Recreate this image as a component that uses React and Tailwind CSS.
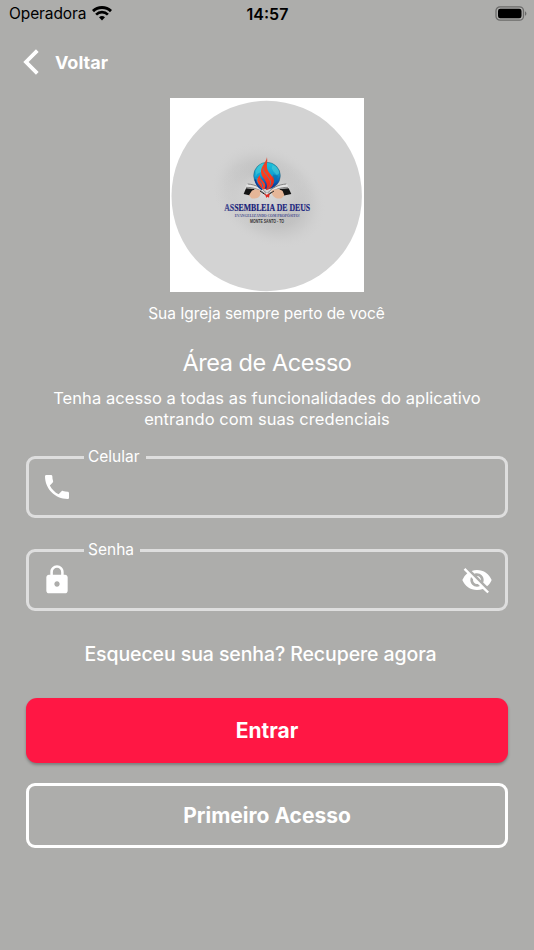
import React from 'react'
import { MdLock, MdPhone, MdVisibilityOff } from 'react-icons/md'

function StatusBar() {
  return (
    <div className="grid h-7 grid-cols-3 items-center pl-[9px] pr-[7px] text-black">
      <div className="flex items-center gap-[6px]">
        <span className="text-[15.5px] leading-7 tracking-[-0.1px]">Operadora</span>
        <svg viewBox="0 0 20 15" className="-mt-[2px] h-[15px] w-5" fill="none" stroke="currentColor">
          <path d="M1 5.1a13 13 0 0 1 18 0" strokeWidth="2.9" />
          <path d="M4.1 8.6a8.5 8.5 0 0 1 11.8 0" strokeWidth="2.7" />
          <path d="M10 14.4l-3-3.1a4.4 4.4 0 0 1 6 0z" fill="currentColor" stroke="none" />
        </svg>
      </div>
      <span className="pr-px text-center text-[16px] font-semibold leading-7">14:57</span>
      <svg viewBox="0 0 32 15" className="-mt-[2px] h-[15px] w-8 justify-self-end" fill="none">
        <rect x="1" y="0.8" width="27.5" height="13.4" rx="4" stroke="#6b6b6a" strokeWidth="1.3" />
        <rect x="3" y="2.8" width="23.5" height="9.4" rx="2.2" fill="#000" />
        <path d="M30 5.2c1.9.8 1.9 3.8 0 4.6z" fill="#6b6b6a" />
      </svg>
    </div>
  )
}

function Logo() {
  return (
    <svg viewBox="0 0 194 194" className="h-[194px] w-[194px] bg-white">
      <defs>
        <radialGradient id="shade">
          <stop offset="0" stopColor="#b0b0b0" />
          <stop offset="0.45" stopColor="#b4b4b4" stopOpacity="0.85" />
          <stop offset="0.75" stopColor="#c4c4c4" stopOpacity="0.45" />
          <stop offset="1" stopColor="#d3d3d3" stopOpacity="0" />
        </radialGradient>
        <radialGradient id="light">
          <stop offset="0" stopColor="#dadada" />
          <stop offset="0.5" stopColor="#d2d2d2" stopOpacity="0.8" />
          <stop offset="1" stopColor="#d0d0d0" stopOpacity="0" />
        </radialGradient>
        <linearGradient id="globe" x1="0.3" y1="0" x2="0.4" y2="1">
          <stop offset="0" stopColor="#1cc6dc" />
          <stop offset="0.5" stopColor="#0f9fd2" />
          <stop offset="0.8" stopColor="#0b55b4" />
          <stop offset="1" stopColor="#0a2f8c" />
        </linearGradient>
        <linearGradient id="fire" x1="0" y1="0" x2="0" y2="1">
          <stop offset="0" stopColor="#d8442e" />
          <stop offset="0.5" stopColor="#ff3f1c" />
          <stop offset="1" stopColor="#e8251c" />
        </linearGradient>
        <linearGradient id="title">
          <stop offset="0" stopColor="#5a609c" />
          <stop offset="0.15" stopColor="#141a72" />
          <stop offset="1" stopColor="#1f2680" />
        </linearGradient>
      </defs>
      <circle cx="96.7" cy="98" r="95.2" fill="#d3d3d3" />
      <ellipse cx="99" cy="98" rx="62" ry="48" transform="rotate(35 99 98)" fill="url(#shade)" />
      <ellipse cx="94" cy="97" rx="50" ry="34" fill="url(#light)" />

      <g transform="translate(40 47) scale(0.3333)">
        {/* open book */}
        <path d="M171 147c-14-18-34-29-60-30l-8 17c24-2 46 3 68 21 20-18 44-23 68-21l-8-17c-26 1-46 12-60 30z" fill="#e4e4e4" />
        <path d="M169 144c-14-16-32-25-56-27M168 148c-16-13-36-21-60-21M173 144c14-16 32-25 56-27M174 148c16-13 36-21 60-21" fill="none" stroke="#555" strokeWidth="2" />

        {/* globe */}
        <circle cx="171" cy="92" r="40" fill="url(#globe)" stroke="#2a5a70" strokeWidth="1.5" />
        <path d="M137 78c4-12 12-20 22-23l6 6-9 9-3 11-12 6-4 9zM188 60c11 4 18 13 20 24l-7 6-10-10-6-10zM140 98l11 5 3 13-5 4c-6-5-10-12-9-22z" fill="#5fd4d8" opacity="0.45" />
        <path d="M190 88l14 4-7 20-12 8z" fill="#0a6fb0" opacity="0.7" />

        {/* flame */}
        <path d="M171 36c-2 16-18 28-18 44 0 18 18 24 18 42 0 6-2 10-4 14 14-4 26-16 24-30-2-16-18-22-20-38-1-10 2-20 0-32z" fill="url(#fire)" />
        <path d="M160 70c-2 16 22 26 22 44 0 8-4 14-10 18" fill="none" stroke="#14a0cf" strokeWidth="2" />
        <path d="M188 92c6 12 4 24-4 34l-12 10c10-14 16-26 16-44z" fill="#e4301f" />
        <path d="M150 90c-2 14 16 18 16 32 0 5-2 9-4 12-8-6-18-16-20-26-1-7 3-12 8-18z" fill="#ff3a1c" />
        <path d="M149 106c4 6 10 10 9 20" fill="none" stroke="#1687c4" strokeWidth="3" />
        <path d="M136 104c1 12 8 22 20 30" fill="none" stroke="#0a3a94" strokeWidth="4" />

        {/* sleeves and hands */}
        <path d="M108 130l26 2-10 20-23-5zM236 130l-28 2 11 20 25-5z" fill="#151515" />
        <path d="M125 138c7-6 21-6 27 0l-1 11c-4 10-14 13-27 11l-7-9zM218 138c-7-6-27-8-35 0l4 11c6 10 16 13 28 11l8-9z" fill="#e5b698" />
        <path d="M150 138l14 10M192 138l-15 10" fill="none" stroke="#222" strokeWidth="3" />
        <path d="M162 145l8 4 9-4-2 13-5-3-3 4-2-6z" fill="#e02a22" />
      </g>

      <g textAnchor="middle">
        <text x="97.2" y="113.3" textLength="86" lengthAdjust="spacingAndGlyphs" className="font-['Liberation_Serif',serif] text-[11px] font-bold" fill="url(#title)" stroke="#1b2280" strokeWidth="0.2">ASSEMBLEIA DE DEUS</text>
        <text x="97.2" y="119.1" textLength="65" lengthAdjust="spacingAndGlyphs" className="font-['Liberation_Serif',serif] text-[4.2px] font-bold" fill="#4a5190">EVANGELIZANDO COM PROPÓSITO!</text>
        <text x="97" y="124.6" textLength="34" lengthAdjust="spacingAndGlyphs" className="font-['Liberation_Sans',sans-serif] text-[4.7px] font-bold" fill="#333">MONTE SANTO - TO</text>
      </g>
    </svg>
  )
}

function Field({ label, type = 'text', icon, action }) {
  return (
    <fieldset className="h-[72px] min-w-0 rounded-[9px] border-[3px] border-[#dedede] pl-[12px] pr-[12px]">
      <legend className="ml-[43px] h-[22px] pl-[4px] pr-[6px] text-[15.5px] leading-[22px]">{label}</legend>
      <div className="-mt-[10px] flex h-[57px] w-full items-center">
        {icon}
        <input type={type} aria-label={label} className="h-full min-w-0 flex-1 bg-transparent px-4 outline-none" />
        {action}
      </div>
    </fieldset>
  )
}

export default function App() {
  return (
    <div className="flex h-[950px] w-[534px] flex-col overflow-hidden bg-[#adadab] font-['Inter',sans-serif] text-white">
      <StatusBar />

      <header className="flex h-[70px] items-center pb-[2px] pl-[23px]">
        <button type="button" className="flex items-center gap-4" aria-label="Voltar">
          <svg viewBox="0 0 16 26" className="h-[26px] w-4" fill="none" stroke="currentColor" strokeWidth="3.8">
            <path d="M14.3 1.7L3 13l11.3 11.3" />
          </svg>
          <span className="text-[18px] font-bold">Voltar</span>
        </button>
      </header>

      <main className="flex flex-col items-center px-[26px]">
        <Logo />
        <p className="mt-[10px] mr-px text-[15.5px] leading-6 tracking-[-0.05px]">Sua Igreja sempre perto de você</p>
        <h1 className="mt-[21px] text-[23.5px] leading-8 tracking-[-0.45px]">Área de Acesso</h1>
        <p className="mt-[9px] text-center text-[16.5px] leading-[21px] tracking-[0.06px]">
          Tenha acesso a todas as funcionalidades do aplicativo
          <br />
          entrando com suas credenciais
        </p>

        <form className="mt-[16px] flex w-full flex-col gap-[21px]" onSubmit={e => e.preventDefault()}>
          <Field label="Celular" icon={<MdPhone className="h-8 w-8" />} />
          <Field
            label="Senha"
            type="password"
            icon={<MdLock className="h-8 w-8" />}
            action={<MdVisibilityOff className="h-8 w-8" />}
          />
        </form>

        <button type="button" className="mt-[29px] mr-[13px] text-[19.5px] font-medium leading-7 tracking-[-0.09px]">
          Esqueceu sua senha? Recupere agora
        </button>
        <button type="button" className="mt-[30px] h-[65px] w-full rounded-[11px] bg-[#ff1744] text-[21px] font-bold shadow-[0_2px_3px_rgba(0,0,0,0.28)]">
          Entrar
        </button>
        <button type="button" className="mt-5 h-[65px] w-full rounded-[9px] border-[3px] border-white text-[21px] font-bold">
          Primeiro Acesso
        </button>
      </main>
    </div>
  )
}
